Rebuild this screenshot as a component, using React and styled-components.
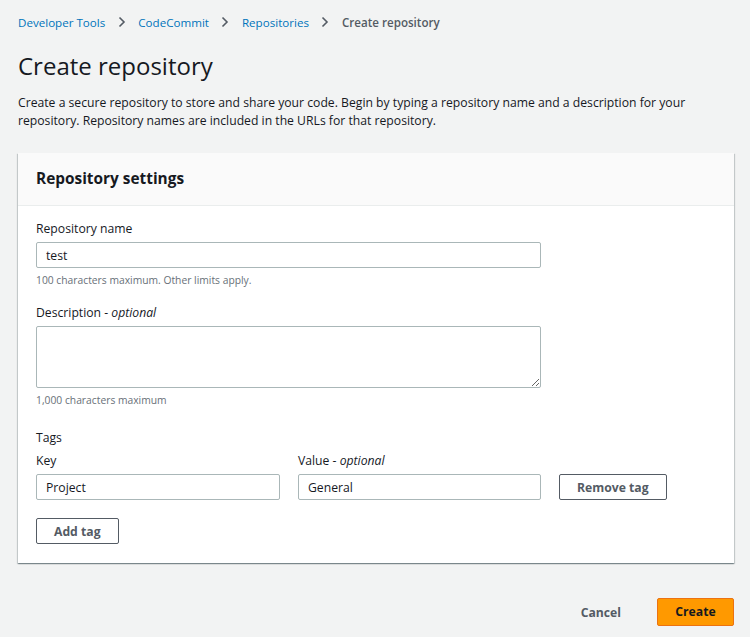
import React from 'react';
import styled, {createGlobalStyle} from 'styled-components';

const GlobalStyle = createGlobalStyle`
	body {
		margin: 0;
		background: #f2f3f3;
		font-family: "Open Sans", "Noto Sans", sans-serif;
		color: #16191f;
	}
	* { box-sizing: border-box; }
`;

const Page = styled.div`
	padding: 12px 16px 10px 18px;
	display: flex;
	flex-direction: column;
`;

const Crumbs = styled.nav`
	display: flex;
	align-items: center;
	gap: 10.5px;
	font-size: 11.6px;
	height: 20px;
`;

const Crumb = styled.a`
	color: ${p => p.current ? '#545b64' : '#0073bb'};
	font-weight: ${p => p.current ? 600 : 500};
	text-decoration: none;
`;

const Chevron = styled.svg`
	width: 12px;
	height: 12px;
	stroke: #545b64;
	stroke-width: 1.6;
	fill: none;
`;

const Title = styled.h1`
	margin: 18px 0 0;
	font-size: 24px;
	font-weight: 400;
	line-height: 32px;
`;

const Intro = styled.p`
	margin: 12px 0 0;
	font-size: 12.2px;
	line-height: 18px;
	max-width: 690px;
`;

const Card = styled.section`
	margin-top: 23px;
	background: #fff;
	box-shadow: 0 1px 1px 0 rgba(0, 28, 36, 0.3), 1px 1px 1px 0 rgba(0, 28, 36, 0.15), -1px 1px 1px 0 rgba(0, 28, 36, 0.15);
`;

const CardHeader = styled.header`
	background: #fafafa;
	border-bottom: 1px solid #eaeded;
	padding: 15px 18px;
	height: 53px;
	font-size: 15.4px;
	font-weight: 700;
	line-height: 22px;
`;

const CardBody = styled.div`
	padding: 14px 18px 19px;
	display: flex;
	flex-direction: column;
`;

const Field = styled.div`
	display: flex;
	flex-direction: column;
	width: ${p => p.width || '505px'};
	margin-bottom: ${p => p.gap || '0'};
`;

const Label = styled.label`
	font-size: 12.2px;
	line-height: 18px;
	margin-bottom: ${p => p.space || '4px'};
	em { font-style: italic; }
`;

const Input = styled.input`
	height: 26px;
	border: 1px solid #aab7b8;
	border-radius: 2px;
	padding: 0 9px;
	font-family: inherit;
	font-size: 12.2px;
	color: #16191f;
	outline: none;
`;

const TextArea = styled.textarea`
	height: 62px;
	border: 1px solid #aab7b8;
	border-radius: 2px;
	font-family: inherit;
	resize: vertical;
	outline: none;
`;

const Hint = styled.span`
	margin-top: 5px;
	font-size: 10.3px;
	line-height: 14px;
	color: #687078;
`;

const TagRow = styled.div`
	display: flex;
	align-items: flex-end;
	gap: 18px;
`;

const Button = styled.button`
	height: 26px;
	padding: 0 17px;
	margin-top: ${p => p.top || '0'};
	border: 1px solid #545b64;
	border-radius: 2px;
	background: #fff;
	color: #545b64;
	font-family: inherit;
	font-size: 12.2px;
	font-weight: 700;
	cursor: pointer;
	align-self: ${p => p.inline ? 'flex-end' : 'flex-start'};
`;

const Actions = styled.div`
	display: flex;
	justify-content: flex-end;
	align-items: center;
	gap: 22px;
	margin-top: 34px;
`;

const LinkButton = styled.button`
	border: none;
	background: none;
	color: #545b64;
	font-family: inherit;
	font-size: 12.2px;
	font-weight: 700;
	padding: 0 14px;
	height: 28px;
	cursor: pointer;
	margin-top: 1px;
`;

const Primary = styled.button`
	height: 28px;
	width: 77px;
	border: 1px solid #ec7211;
	border-radius: 2px;
	background: #ff9900;
	color: #16191f;
	font-family: inherit;
	font-size: 12.2px;
	font-weight: 700;
	cursor: pointer;
`;

function ChevronIcon()
{
	return <Chevron viewBox="0 0 12 12"><path d="M3.5 1.5 L8 6 L3.5 10.5" /></Chevron>;
}

function App()
{
	return <Page>
		<GlobalStyle />
		<Crumbs>
			<Crumb href="#">Developer Tools</Crumb>
			<ChevronIcon />
			<Crumb href="#">CodeCommit</Crumb>
			<ChevronIcon />
			<Crumb href="#">Repositories</Crumb>
			<ChevronIcon />
			<Crumb current>Create repository</Crumb>
		</Crumbs>
		<Title>Create repository</Title>
		<Intro>
			Create a secure repository to store and share your code. Begin by typing a repository name and a description for your repository. Repository names are included in the URLs for that repository.
		</Intro>
		<Card>
			<CardHeader>Repository settings</CardHeader>
			<CardBody>
				<Field gap="17px">
					<Label>Repository name</Label>
					<Input defaultValue="test" />
					<Hint>100 characters maximum. Other limits apply.</Hint>
				</Field>
				<Field gap="22px">
					<Label>Description - <em>optional</em></Label>
					<TextArea />
					<Hint>1,000 characters maximum</Hint>
				</Field>
				<Label space="5px">Tags</Label>
				<TagRow>
					<Field width="244px">
						<Label>Key</Label>
						<Input defaultValue="Project" />
					</Field>
					<Field width="243px">
						<Label>Value - <em>optional</em></Label>
						<Input defaultValue="General" />
					</Field>
					<Button inline>Remove tag</Button>
				</TagRow>
				<Button top="18px">Add tag</Button>
			</CardBody>
		</Card>
		<Actions>
			<LinkButton>Cancel</LinkButton>
			<Primary>Create</Primary>
		</Actions>
	</Page>;
}

export default App;
